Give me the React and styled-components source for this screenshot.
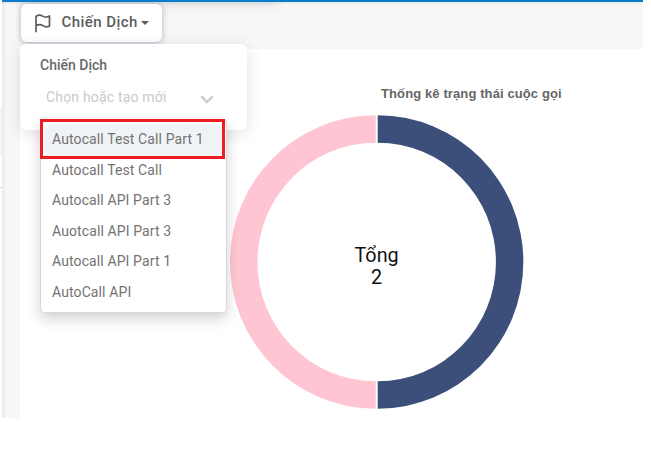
import React from "react";
import styled, { createGlobalStyle } from "styled-components";

const GlobalStyle = createGlobalStyle`
  * { box-sizing: border-box; }
  body { margin: 0; background: #fff; font-family: Roboto, "Liberation Sans", sans-serif; }
`;

const Page = styled.div`
  width: 651px;
  height: 476px;
  overflow: hidden;
  background: #fff;
`;

const Frame = styled.div`
  display: flex;
  width: 643px;
  height: 418px;
`;

const SideNav = styled.aside`
  width: 2px;
  padding-top: 68px;
`;

const ActiveNav = styled.div`
  height: 48px;
  margin-top: 40px;
  background: #f4f4fb;
`;

const NavDivider = styled.div`
  height: 1px;
  margin-top: 31px;
  background: #d8d8dc;
`;

const Main = styled.main`
  position: relative;
  flex: 1;
  display: flex;
  flex-direction: column;
  overflow: hidden;
  border-top: 2px solid #0b7cc7;
  background: linear-gradient(90deg, #ebebeb, #f7f7f7 5px);
`;

const ToolbarShadow = styled.div`
  position: absolute;
  left: 18px;
  top: -20px;
  width: 258px;
  height: 20px;
  border-radius: 6px;
  box-shadow: 0 2px 12px rgba(60, 60, 90, 0.16);
`;

const Toolbar = styled.header`
  position: relative;
  z-index: 2;
  height: 47px;
  padding: 2px 0 0 18.5px;
  box-shadow: inset 0 2px 1px rgba(0, 0, 0, 0.04);
`;

const CampaignButton = styled.button`
  display: flex;
  align-items: center;
  width: 141px;
  height: 37.5px;
  padding: 0 0 0 13.5px;
  border: 0;
  border-radius: 6px;
  background: #fff;
  box-shadow: 0 1px 6px rgba(50, 50, 93, 0.36);
  color: #5c5c5c;
  font: 500 15px/20px Roboto, sans-serif;
  letter-spacing: 0.45px;
`;

const ButtonLabel = styled.span`
  position: relative;
  top: -0.5px;
  margin: 0 3.5px 0 10.5px;
  white-space: nowrap;
`;

const Panel = styled.section`
  position: absolute;
  left: 18px;
  top: 42px;
  width: 227px;
  height: 86px;
  padding: 12px 20px 0;
  border-radius: 6px;
  background: #fff;
  box-shadow: 0 3px 16px rgba(50, 50, 93, 0.14);
`;

const FieldLabel = styled.label`
  display: block;
  color: #686868;
  font: 500 14px/18px Roboto, sans-serif;
`;

const Select = styled.div`
  display: flex;
  align-items: center;
  justify-content: space-between;
  height: 28px;
  margin-top: 9px;
  padding: 0 13px 0 6px;
  color: #c9c9c9;
  font-size: 14px;
  letter-spacing: 0.18px;
`;

const Menu = styled.ul`
  position: absolute;
  left: 20px;
  top: 75px;
  width: 187px;
  height: 194px;
  margin: 0;
  padding: 5px 4px;
  list-style: none;
  border: 1px solid #d8d8d8;
  border-radius: 4px;
  background: #fff;
  box-shadow: 0 6px 14px rgba(0, 0, 0, 0.18);
`;

const Option = styled.li`
  height: 30.6px;
  padding-left: 7px;
  border-radius: 6px;
  background: ${(p) => (p.$active ? "#f0f3f6" : "transparent")};
  color: #737373;
  font-size: 14px;
  line-height: 29px;
  letter-spacing: 0.11px;
  white-space: nowrap;
`;

const Highlight = styled.div`
  position: absolute;
  left: 20px;
  top: 75px;
  width: 185px;
  height: 40px;
  border: 3px solid #ed1c24;
`;

const ChartCard = styled.section`
  flex: 1;
  margin-left: 18px;
  padding-top: 37px;
  background: #fff;
`;

const ChartTitle = styled.h2`
  width: 181px;
  margin: 0 0 0 361px;
  color: #666;
  font: bold 13px/16px "Liberation Sans", Arial, sans-serif;
  letter-spacing: 0.11px;
  white-space: nowrap;
`;

const Donut = styled.svg`
  display: block;
  margin: 13px 0 0 210px;
`;

const CenterText = styled.text`
  fill: #111;
  font: 400 19.8px Roboto, sans-serif;
  text-anchor: middle;
`;

const options = [
  "Autocall Test Call Part 1",
  "Autocall Test Call",
  "Autocall API Part 3",
  "Auotcall API Part 3",
  "Autocall API Part 1",
  "AutoCall API",
];

function FlagIcon() {
  return (
    <svg width="17" height="20" viewBox="0 0 17 20" fill="none" stroke="#5c5c5c" strokeWidth="1.7" strokeLinejoin="round">
      <path d="M2 19.2V3.4C4.2 1.7 6.5 1.8 8.6 3.1C10.8 4.4 13 4.6 15.5 2.9V12.9C13.2 14.2 11 14 9 12.6C6.8 11.2 4.3 11.3 2 12.9" />
    </svg>
  );
}

export default function App() {
  return (
    <Page>
      <GlobalStyle />
      <Frame>
        <SideNav>
          <ActiveNav />
          <NavDivider />
        </SideNav>
        <Main>
          <ToolbarShadow />
          <Toolbar>
            <CampaignButton>
              <FlagIcon />
              <ButtonLabel>Chiến Dịch</ButtonLabel>
              <svg width="8" height="4" viewBox="0 0 8 4"><path d="M0 0H8L4 4Z" fill="#5c5c5c" /></svg>
            </CampaignButton>
            <Panel>
              <FieldLabel>Chiến Dịch</FieldLabel>
              <Select>
                Chọn hoặc tạo mới
                <svg width="14" height="9" viewBox="0 0 14 9" fill="none" stroke="#ccc" strokeWidth="2.4" transform="translate(0 2)">
                  <path d="M1.2 1.2L7 7L12.8 1.2" />
                </svg>
              </Select>
              <Menu>
                {options.map((name, i) => (
                  <Option key={name} $active={i === 0}>{name}</Option>
                ))}
              </Menu>
              <Highlight />
            </Panel>
          </Toolbar>
          <ChartCard>
            <ChartTitle>Thống kê trạng thái cuộc gọi</ChartTitle>
            <Donut width="294" height="294" viewBox="0 0 294 294">
              <path d="M145.7 0.2A145.7 146.8 0 0 0 145.7 293.8V266.3A118.3 119.3 0 0 1 145.7 27.7Z" fill="#ffc5d3" />
              <path d="M147.7 0.2A145.7 146.8 0 0 1 147.7 293.8V266.3A118.3 119.3 0 0 0 147.7 27.7Z" fill="#3b4f7a" />
              <CenterText x="146.6" y="147">Tổng</CenterText>
              <CenterText x="146.6" y="169">2</CenterText>
            </Donut>
          </ChartCard>
        </Main>
      </Frame>
    </Page>
  );
}
